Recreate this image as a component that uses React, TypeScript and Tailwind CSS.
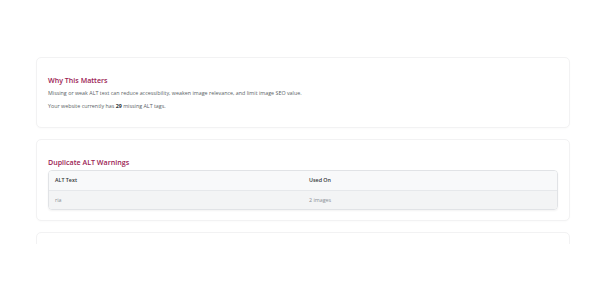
import React from 'react';

const duplicates = [{ alt: 'ria', count: 2 }];

export default function App() {
    const missingCount = 29;

    return (
        <div className="w-[590px] h-[300px] bg-white" style={{ fontFamily: '"Open Sans", "Noto Sans", sans-serif' }}>
            <div className="h-[244px] overflow-hidden pt-[57px] pl-[36px] pr-[20px]">
                <div className="flex flex-col gap-[11px]">
                    {/* Why this matters */}
                    <div className="bg-white border border-[#f2f2f3] rounded-[5px] shadow-[0_1px_2px_rgba(0,0,0,0.02)] p-[11px]">
                        <h3 className="mt-[5px] mb-[3px] text-[7.1px] leading-[12px] font-semibold text-[#9b2152]">Why This Matters</h3>
                        <p className="text-[5.35px] leading-[9px] text-[#5a5f66] mb-[4px]">
                            Missing or weak ALT text can reduce accessibility, weaken image relevance, and limit image SEO value.
                        </p>
                        <p className="text-[5.35px] leading-[9px] text-[#5a5f66] mb-[5px]">
                            Your website currently has <strong className="font-bold text-[#2b2f33]">{missingCount}</strong> missing ALT tags.
                        </p>
                    </div>

                    {/* Duplicate ALT warnings */}
                    <div className="bg-white border border-[#f2f2f3] rounded-[5px] shadow-[0_1px_2px_rgba(0,0,0,0.02)] px-[11px] pt-[11px] pb-[10px]">
                        <h3 className="mt-[5px] mb-[2px] text-[7.1px] leading-[12px] font-semibold text-[#9b2152]">Duplicate ALT Warnings</h3>
                        <div className="border border-[#e1e3e6] rounded-[4px] overflow-hidden shadow-[0_1px_2px_rgba(0,0,0,0.05)]">
                            <table className="w-full text-[5.35px]">
                                <thead className="bg-[#f8f9fa] border-b border-[#e6e8eb]">
                                    <tr className="h-[19px]">
                                        <th className="text-left px-[6px] font-semibold text-[#333538] w-1/2">ALT Text</th>
                                        <th className="text-left px-[6px] font-semibold text-[#333538]">Used On</th>
                                    </tr>
                                </thead>
                                <tbody className="bg-[#f3f4f5]">
                                    {duplicates.map((d) => (
                                        <tr key={d.alt} className="h-[19px]">
                                            <td className="px-[6px] text-[#8a8f96]">{d.alt}</td>
                                            <td className="px-[6px] text-[#8a8f96]">{d.count} images</td>
                                        </tr>
                                    ))}
                                </tbody>
                            </table>
                        </div>
                    </div>

                    {/* next card (cut off) */}
                    <div className="bg-white border border-[#f2f2f3] rounded-[5px] h-[60px]" />
                </div>
            </div>
        </div>
    );
}
